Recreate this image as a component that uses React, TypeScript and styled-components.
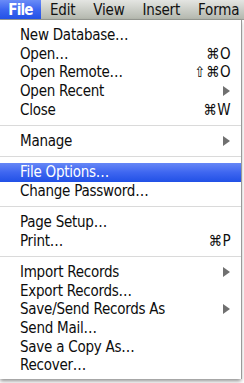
import React from "react";
import styled, { createGlobalStyle } from "styled-components";

const GlobalStyle = createGlobalStyle`
  html, body { margin: 0; padding: 0; background: #ffffff; overflow: hidden; }
  * { box-sizing: border-box; }
`;

const FONT = `"DejaVu Sans Condensed", "DejaVu Sans", "Liberation Sans", sans-serif`;

const Screen = styled.div`
  position: relative;
  width: 244px;
  height: 383px;
  overflow: hidden;
  background: #ffffff;
  font-family: ${FONT};
  font-stretch: condensed;
`;

const MenuBar = styled.div`
  display: flex;
  align-items: stretch;
  height: 20px;
  background: linear-gradient(to bottom, #e4e5e2 0%, #c9ccc5 55%, #b4b8ae 100%);
  border-bottom: 1px solid #9a9d96;
`;

const MenuTitle = styled.div<{ $active?: boolean }>`
  display: flex;
  align-items: center;
  justify-content: center;
  flex: none;
  width: ${(p) => (p.$active ? "41px" : "auto")};
  padding: 0 ${(p) => (p.$active ? "0" : "9px")};
  font-size: 15px;
  font-weight: ${(p) => (p.$active ? 700 : 400)};
  letter-spacing: ${(p) => (p.$active ? "-0.8px" : "-0.2px")};
  color: ${(p) => (p.$active ? "#ffffff" : "#111111")};
  background: ${(p) =>
    p.$active ? "linear-gradient(to bottom, #6a8cf7 0%, #3d66f0 50%, #2352e6 100%)" : "transparent"};
  white-space: nowrap;
`;

const Menu = styled.div`
  width: 241px;
  padding: 6px 0 4px;
  background: rgba(255, 255, 255, 0.97);
  box-shadow: 1px 0 0 #9a9a9a, 0 2px 4px rgba(0, 0, 0, 0.45);
`;

const Row = styled.div<{ $active?: boolean }>`
  display: flex;
  align-items: center;
  justify-content: space-between;
  height: 18.6px;
  padding: 0 10px 0 20px;
  font-size: 15px;
  letter-spacing: -0.25px;
  color: ${(p) => (p.$active ? "#ffffff" : "#0d0d0d")};
  background: ${(p) =>
    p.$active ? "linear-gradient(to bottom, #6687f6 0%, #3e66f0 50%, #2150e6 100%)" : "transparent"};
  white-space: nowrap;
`;

const Shortcut = styled.span`
  letter-spacing: 0.4px;
`;

const Arrow = styled.span`
  width: 0;
  height: 0;
  margin-right: 1px;
  border-top: 5px solid transparent;
  border-bottom: 5px solid transparent;
  border-left: 7.5px solid #707070;
`;

const Separator = styled.div`
  height: 12.75px;
  display: flex;
  align-items: center;
  &::after {
    content: "";
    flex: 1;
    height: 1px;
    background: #dadada;
  }
`;

type Item =
  | { kind: "item"; label: string; shortcut?: string; submenu?: boolean; active?: boolean }
  | { kind: "sep" };

const items: Item[] = [
  { kind: "item", label: "New Database…" },
  { kind: "item", label: "Open…", shortcut: "⌘O" },
  { kind: "item", label: "Open Remote…", shortcut: "⇧⌘O" },
  { kind: "item", label: "Open Recent", submenu: true },
  { kind: "item", label: "Close", shortcut: "⌘W" },
  { kind: "sep" },
  { kind: "item", label: "Manage", submenu: true },
  { kind: "sep" },
  { kind: "item", label: "File Options…", active: true },
  { kind: "item", label: "Change Password…" },
  { kind: "sep" },
  { kind: "item", label: "Page Setup…" },
  { kind: "item", label: "Print…", shortcut: "⌘P" },
  { kind: "sep" },
  { kind: "item", label: "Import Records", submenu: true },
  { kind: "item", label: "Export Records…" },
  { kind: "item", label: "Save/Send Records As", submenu: true },
  { kind: "item", label: "Send Mail…" },
  { kind: "item", label: "Save a Copy As…" },
  { kind: "item", label: "Recover…" },
];

const titles = ["File", "Edit", "View", "Insert", "Forma"];

export default function App() {
  return (
    <>
      <GlobalStyle />
      <Screen>
        <MenuBar>
          {titles.map((t, i) => (
            <MenuTitle key={t} $active={i === 0}>
              {t}
            </MenuTitle>
          ))}
        </MenuBar>
        <Menu>
          {items.map((it, i) =>
            it.kind === "sep" ? (
              <Separator key={i} />
            ) : (
              <Row key={i} $active={it.active}>
                <span>{it.label}</span>
                {it.shortcut && <Shortcut>{it.shortcut}</Shortcut>}
                {it.submenu && <Arrow />}
              </Row>
            )
          )}
        </Menu>
      </Screen>
    </>
  );
}
